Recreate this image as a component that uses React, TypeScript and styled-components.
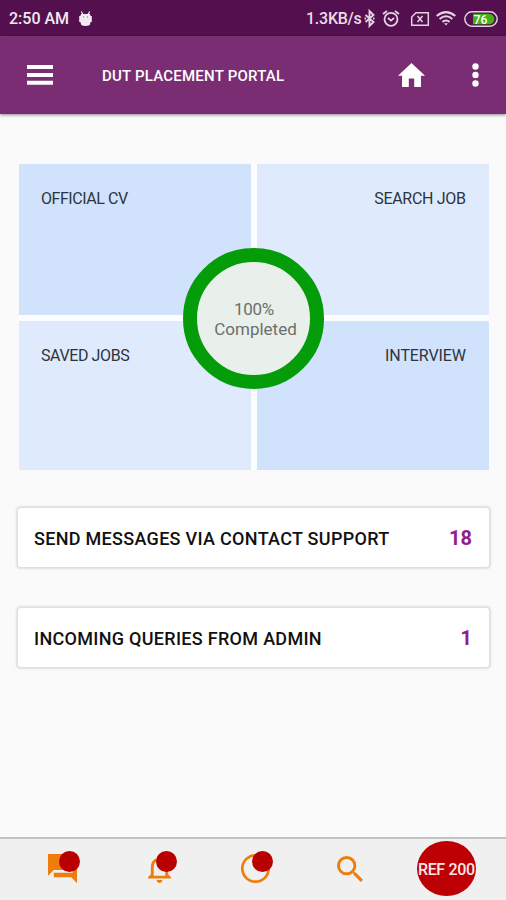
import React from "react";
import styled, { createGlobalStyle } from "styled-components";

const GlobalStyle = createGlobalStyle`
  * { box-sizing: border-box; }
  body { margin: 0; background: #fafafa; }
`;

const Screen = styled.div`
  width: 506px;
  height: 900px;
  display: flex;
  flex-direction: column;
  overflow: hidden;
  background: #fafafa;
  font-family: Roboto, "Liberation Sans", sans-serif;
`;

const Glyph = styled.svg<{ $w: number; $h: number }>`
  display: block;
  flex: none;
  width: ${(p) => p.$w}px;
  height: ${(p) => p.$h}px;
  overflow: visible;
`;

const Label = styled.span<{ $size: number; $weight?: number; $color: string; $track?: number }>`
  font-size: ${(p) => p.$size}px;
  font-weight: ${(p) => p.$weight ?? 400};
  color: ${(p) => p.$color};
  letter-spacing: ${(p) => p.$track ?? 0}px;
  margin-right: ${(p) => -(p.$track ?? 0)}px;
  white-space: nowrap;
`;

const StatusBar = styled.div`
  height: 36px;
  flex: none;
  display: flex;
  align-items: center;
  justify-content: space-between;
  padding: 1px 7px 0 9px;
  background: #54104e;
`;

const StatusGroup = styled.div`
  display: flex;
  align-items: center;
  gap: 9px;
`;

const StatusIcons = styled.div`
  display: grid;
  grid-template-columns: 58px 18px 29px 25px 28px 35px;
  align-items: center;
`;

const AppBar = styled.header`
  height: 78px;
  flex: none;
  display: flex;
  align-items: center;
  padding: 0 27px 1px;
  background: #7a2d72;
  box-shadow: 0 1px 3px rgba(0, 0, 0, 0.45);
`;

const Title = styled.div`
  flex: 1;
  padding: 2px 0 0 49px;
`;

const BarActions = styled.div`
  display: flex;
  align-items: center;
  gap: 47px;
`;

const Content = styled.main`
  flex: 1;
  display: flex;
  flex-direction: column;
  padding: 50px 17px 0 18px;
`;

const Tiles = styled.section`
  position: relative;
  width: 470px;
  height: 306px;
  margin-left: 1px;
  display: grid;
  grid-template-columns: 232px 232px;
  grid-template-rows: 151px 149px;
  gap: 6px;
  background: #fcfdff;
`;

const Tile = styled.div<{ $tone: "deep" | "pale"; $end?: boolean }>`
  display: flex;
  justify-content: ${(p) => (p.$end ? "flex-end" : "flex-start")};
  padding: 24.5px 23px 0 22px;
  line-height: 19px;
  background: ${(p) => (p.$tone === "deep" ? "#d0e2fc" : "#dfeafd")};
`;

const Ring = styled.div`
  position: absolute;
  left: 164px;
  top: 84px;
  width: 141px;
  height: 141px;
  padding: 1px 0 0 1px;
  border: 14px solid #059c09;
  border-radius: 50%;
  background: #e9efea;
  display: flex;
  flex-direction: column;
  align-items: center;
  justify-content: center;
  line-height: 20px;
`;

const RingCaption = styled.div`
  padding-left: 3px;
`;

const Cards = styled.section`
  display: flex;
  flex-direction: column;
  gap: 41px;
  padding-top: 38px;
`;

const Card = styled.div`
  height: 59px;
  display: flex;
  align-items: center;
  justify-content: space-between;
  padding: 1px 17px 0 16px;
  border-radius: 3px;
  background: #fff;
  box-shadow: 0 0 2px 1.5px rgba(0, 0, 0, 0.11);
`;

const BottomNav = styled.nav`
  height: 63px;
  flex: none;
  display: grid;
  grid-template-columns: 48px 100px 92.5px 96.5px 80px 59px;
  align-items: start;
  border-top: 2px solid #c2c2c2;
  background: #f0f0f0;
`;

const NavItem = styled.div<{ $top: number }>`
  position: relative;
  padding-top: ${(p) => p.$top}px;
`;

const Badge = styled.i<{ $left: number }>`
  position: absolute;
  top: 12px;
  left: ${(p) => p.$left}px;
  width: 21px;
  height: 21px;
  border-radius: 50%;
  background: #b80000;
`;

const RefButton = styled.div`
  width: 59px;
  height: 55px;
  margin-top: 2px;
  padding-top: 1px;
  border-radius: 50%;
  display: flex;
  align-items: center;
  justify-content: center;
  background: #bd0003;
`;

const ORANGE = "#ee7d0b";

const tiles = [
  { text: "OFFICIAL CV", tone: "deep", end: false, track: -0.45 },
  { text: "SEARCH JOB", tone: "pale", end: true, track: -0.3 },
  { text: "SAVED JOBS", tone: "pale", end: false, track: -0.4 },
  { text: "INTERVIEW", tone: "deep", end: true, track: -0.1 },
] as const;

const cards = [
  { text: "SEND MESSAGES VIA CONTACT SUPPORT", count: 18 },
  { text: "INCOMING QUERIES FROM ADMIN", count: 1 },
];

export default function App() {
  return (
    <Screen>
      <GlobalStyle />
      <StatusBar>
        <StatusGroup>
          <Label $size={16} $weight={500} $color="#f3e9f2">2:50 AM</Label>
          <Glyph $w={15} $h={15} viewBox="0 0 13 15">
            <path d="M2.3.5 4 3.5M10.7.5 9 3.5" stroke="#f3e9f2" strokeWidth="1.2" />
            <path d="M2 3h9l.6 2h1.2v6h-1.2l-.8 3q-4.3 2-8.6 0l-.8-3H.2V5h1.2z" fill="#f3e9f2" />
            <circle cx="4.5" cy="6" r=".7" fill="#a77ca3" />
            <circle cx="8.5" cy="6" r=".7" fill="#a77ca3" />
          </Glyph>
        </StatusGroup>
        <StatusIcons>
          <Label $size={16} $weight={500} $color="#eadcea" $track={-0.25}>1.3KB/s</Label>
          <Glyph $w={11} $h={17} viewBox="0 0 10 17" fill="none" stroke="#e3d2e2" strokeWidth="1.9">
            <path d="M1 5l8 7-4 4V1l4 4-8 7M0 8.500h1.500M8.500 8.500h1.500" />
          </Glyph>
          <Glyph $w={18} $h={17} viewBox="0 0 18 17" fill="none" stroke="#e3d2e2" strokeWidth="1.800">
            <circle cx="9" cy="9.300" r="6.500" />
            <path d="M1 4l4-3M17 4l-4-3M6 8l3 2.600L12 8" />
          </Glyph>
          <Glyph $w={18} $h={14} viewBox="0 0 18 14" fill="none" stroke="#e3d2e2" strokeWidth="1.500">
            <path d="M5 .7h12.300v12.600H.7V5zM6.500 4l5 6M11.500 4l-5 6" />
          </Glyph>
          <Glyph $w={20} $h={15} viewBox="0 0 20 15" fill="none" stroke="#e3d2e2" strokeWidth="2">
            <path d="M.7 5Q10-2.800 19.300 5M3.600 8Q10 2.600 16.400 8M6.400 10.900Q10 8 13.600 10.900" />
            <path d="M8 12.300h4L10 14.500z" fill="#e3d2e2" stroke="none" />
          </Glyph>
          <Glyph $w={34} $h={16} viewBox="0 0 34 16">
            <rect x=".8" y=".8" width="32.400" height="14.400" rx="7.200" fill="#54104e" stroke="#ded0dd" strokeWidth="1.500" />
            <path d="M9 2.700h16a5.300 5.300 0 0 1 0 10.600H9z" fill="#42b316" />
            <text x="16.500" y="12.500" textAnchor="middle" fontSize="12" fontWeight="500" fill="#fff">76</text>
          </Glyph>
        </StatusIcons>
      </StatusBar>

      <AppBar>
        <Glyph $w={26} $h={20} viewBox="0 0 26 20">
          <path d="M0 0h26v4H0zM0 8h26v4H0zM0 15.700h26v4H0z" fill="#fff" />
        </Glyph>
        <Title>
          <Label $size={15} $weight={500} $color="#fff" $track={0.22}>DUT PLACEMENT PORTAL</Label>
        </Title>
        <BarActions>
          <Glyph $w={27} $h={24} viewBox="2 3 20 17" preserveAspectRatio="none">
            <path d="M10 20v-6h4v6h5v-8h3L12 3 2 12h3v8z" fill="#fff" />
          </Glyph>
          <Glyph $w={7} $h={24} viewBox="0 0 7 24" fill="#fff">
            <circle cx="3.500" cy="3.500" r="3.200" />
            <circle cx="3.500" cy="12" r="3.200" />
            <circle cx="3.500" cy="20.500" r="3.200" />
          </Glyph>
        </BarActions>
      </AppBar>

      <Content>
        <Tiles>
          {tiles.map((t) => (
            <Tile key={t.text} $tone={t.tone} $end={t.end}>
              <Label $size={16} $color="#2c3440" $track={t.track}>{t.text}</Label>
            </Tile>
          ))}
          <Ring>
            <Label $size={17} $color="#6b706c" $track={-0.3}>100%</Label>
            <RingCaption>
              <Label $size={17} $color="#6b706c">Completed</Label>
            </RingCaption>
          </Ring>
        </Tiles>
        <Cards>
          {cards.map((c) => (
            <Card key={c.text}>
              <Label $size={18} $weight={500} $color="#111" $track={0.3}>{c.text}</Label>
              <Label $size={20} $weight={700} $color="#931a91">{c.count}</Label>
            </Card>
          ))}
        </Cards>
      </Content>

      <BottomNav>
        <span />
        <NavItem $top={15}>
          <Glyph $w={29} $h={29} viewBox="2 2 20 20">
            <path d="M22 6h-3v9H6v3h12l4 4V6zm-5 7V2H2v15l4-4h11z" fill={ORANGE} />
          </Glyph>
          <Badge $left={11} />
        </NavItem>
        <NavItem $top={15}>
          <Glyph $w={23} $h={29} viewBox="4 2 16 20">
            <path d="M12 22c1.100 0 2-.9 2-2h-4c0 1.100.9 2 2 2zm6-6v-5c0-3.070-1.630-5.640-4.500-6.320V4c0-.83-.67-1.500-1.500-1.500s-1.500.67-1.500 1.500v.68C7.640 5.360 6 7.920 6 11v5l-2 2v1h16v-1l-2-2zm-2 1H8v-6c0-2.480 1.510-4.500 4-4.500s4 2.020 4 4.500v6z" fill={ORANGE} />
          </Glyph>
          <Badge $left={8} />
        </NavItem>
        <NavItem $top={15}>
          <Glyph $w={29} $h={29} viewBox="0 0 29 29" fill="none" stroke={ORANGE} strokeWidth="2.700">
            <circle cx="14.500" cy="14.500" r="13.200" />
          </Glyph>
          <Badge $left={11} />
        </NavItem>
        <NavItem $top={17}>
          <Glyph $w={26} $h={26} viewBox="3 3 17.500 17.500">
            <path d="M15.500 14h-.79l-.28-.27A6.471 6.471 0 0 0 16 9.500 6.500 6.500 0 1 0 9.500 16c1.610 0 3.090-.59 4.230-1.570l.27.28v.79l5 4.990L20.490 19l-4.990-5zm-6 0C7.010 14 5 11.990 5 9.500S7.010 5 9.500 5 14 7.010 14 9.500 11.990 14 9.500 14z" fill={ORANGE} />
          </Glyph>
        </NavItem>
        <RefButton>
          <Label $size={16} $weight={500} $color="#fbe6e6" $track={-0.35}>REF 200</Label>
        </RefButton>
      </BottomNav>
    </Screen>
  );
}
